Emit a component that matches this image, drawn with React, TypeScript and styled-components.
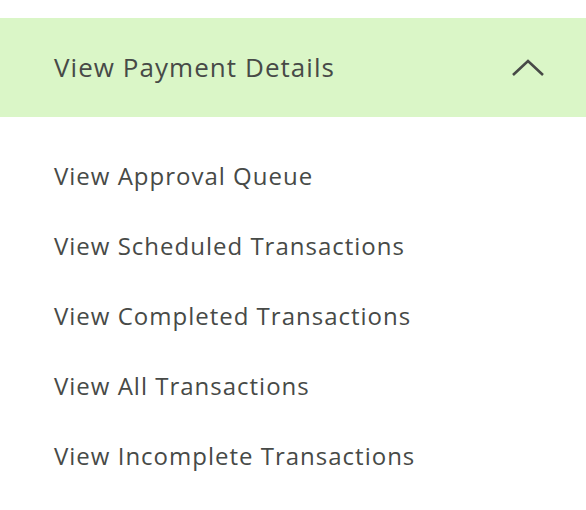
import React from "react";
import styled, { createGlobalStyle } from "styled-components";

const Global = createGlobalStyle`
  html, body { margin: 0; padding: 0; background: #ffffff; }
  body { font-family: "Open Sans", "Noto Sans", sans-serif; }
`;

const Panel = styled.div`
  width: 586px;
  padding-top: 18px;
`;

const Header = styled.button`
  display: flex;
  align-items: center;
  justify-content: space-between;
  width: 100%;
  height: 99px;
  box-sizing: border-box;
  padding: 0 41px 0 54px;
  border: none;
  background: #daf6c7;
  font-family: inherit;
  font-size: 26px;
  letter-spacing: 1.05px;
  color: #474a47;
  cursor: pointer;
`;

const Title = styled.span`
  line-height: 1;
  margin-top: -1px;
`;

const List = styled.ul`
  list-style: none;
  margin: 0;
  padding: 23px 0 0 54px;
  display: flex;
  flex-direction: column;
`;

const Item = styled.li`
  height: 70px;
  display: flex;
  align-items: center;
  font-size: 24px;
  letter-spacing: 1px;
  color: #474a47;
`;

const Chevron = () => (
  <svg width="34" height="20" viewBox="0 0 34 20">
    <polyline
      points="2,17 17,3 32,17"
      fill="none"
      stroke="#474a47"
      strokeWidth="2.6"
    />
  </svg>
);

const items = [
  "View Approval Queue",
  "View Scheduled Transactions",
  "View Completed Transactions",
  "View All Transactions",
  "View Incomplete Transactions",
];

export default function App() {
  return (
    <>
      <Global />
      <Panel>
        <Header>
          <Title>View Payment Details</Title>
          <Chevron />
        </Header>
        <List>
          {items.map((t) => (
            <Item key={t}>{t}</Item>
          ))}
        </List>
      </Panel>
    </>
  );
}
